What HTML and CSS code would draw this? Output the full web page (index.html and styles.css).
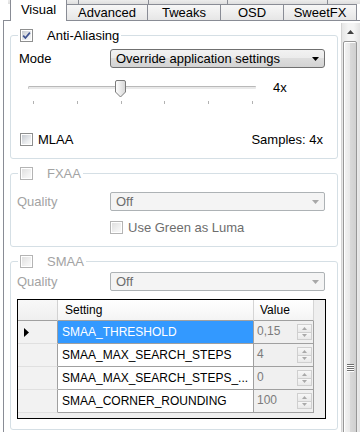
FILE: index.html
```html
<!DOCTYPE html>
<html>
<head>
<meta charset="utf-8">
<title>Visual</title>
<link rel="stylesheet" href="styles.css">
</head>
<body>
<div class="window">
  <div class="tabstrip">
    <div class="tab-gap-left"></div>
    <div class="tab selected w-visual">Visual</div>
    <div class="tab w-adv">Advanced</div>
    <div class="tab w-twk">Tweaks</div>
    <div class="tab w-osd">OSD</div>
    <div class="tab w-sfx">SweetFX</div>
    <div class="tab-gap-right"></div>
  </div>
  <div class="page">
    <div class="content">
      <div class="group g-aa">
        <div class="legend">
          <span class="cb"><svg class="check" width="9" height="9" viewBox="0 0 9 9"><path d="M1.2 4.6 L3.4 7 L7.9 1.6" fill="none" stroke="#3f5390" stroke-width="1.7"/></svg></span>
          <span class="legend-text">Anti-Aliasing</span>
        </div>
        <div class="row mode-row">
          <span class="label">Mode</span>
          <div class="combo">
            <span class="combo-text">Override application settings</span>
            <svg class="combo-arrow" width="7" height="4" viewBox="0 0 7 4"><path d="M0 0 H7 L3.5 4 Z" fill="#000"/></svg>
          </div>
        </div>
        <div class="slider-row">
          <div class="slider">
            <div class="track"></div>
            <div class="ticks"><i></i><i></i><i></i><i></i><i></i><i></i></div>
            <svg class="thumb" width="11" height="18" viewBox="0 0 11 18">
              <defs><linearGradient id="tg" x1="0" y1="0" x2="1" y2="0"><stop offset="0" stop-color="#ffffff"/><stop offset="1" stop-color="#d6d6d6"/></linearGradient></defs>
              <path d="M2 0.5 H9 A1.5 1.5 0 0 1 10.5 2 V12 L5.5 17 L0.5 12 V2 A1.5 1.5 0 0 1 2 0.5 Z" fill="url(#tg)" stroke="#7b7b7b"/>
            </svg>
          </div>
          <span class="slider-val">4x</span>
        </div>
        <div class="row mlaa-row">
          <span class="check-label"><span class="cb"></span><span class="cb-text">MLAA</span></span>
          <span class="samples">Samples: 4x</span>
        </div>
      </div>

      <div class="group g-fx">
        <div class="legend">
          <span class="cb dis"></span>
          <span class="legend-text dis-text">FXAA</span>
        </div>
        <div class="row q-row q-fx">
          <span class="label q-label">Quality</span>
          <div class="combo disabled">
            <span class="combo-text">Off</span>
            <svg class="combo-arrow" width="7" height="4" viewBox="0 0 7 4"><path d="M0 0 H7 L3.5 4 Z" fill="#a7a7a7"/></svg>
          </div>
        </div>
        <div class="row luma-row">
          <span class="check-label"><span class="cb dis"></span><span class="cb-text gray-text">Use Green as Luma</span></span>
        </div>
      </div>

      <div class="group g-sm">
        <div class="legend">
          <span class="cb dis"></span>
          <span class="legend-text dis-text">SMAA</span>
        </div>
        <div class="row q-row q-sm">
          <span class="label q-label">Quality</span>
          <div class="combo disabled">
            <span class="combo-text">Off</span>
            <svg class="combo-arrow" width="7" height="4" viewBox="0 0 7 4"><path d="M0 0 H7 L3.5 4 Z" fill="#a7a7a7"/></svg>
          </div>
        </div>
        <div class="grid">
          <div class="grid-row head">
            <div class="c-rh"></div>
            <div class="c-set">Setting</div>
            <div class="c-val">Value</div>
          </div>
          <div class="grid-row">
            <div class="c-rh"><svg width="5" height="9" viewBox="0 0 5 9"><path d="M0 0 L5 4.5 L0 9 Z" fill="#000"/></svg></div>
            <div class="c-set sel">SMAA_THRESHOLD</div>
            <div class="c-val"><span class="num">0,15</span><span class="spin"><span class="sp-b"><svg width="5" height="3" viewBox="0 0 5 3"><path d="M0 3 L2.5 0 L5 3 Z" fill="#a9a9a9"/></svg></span><span class="sp-b"><svg width="5" height="3" viewBox="0 0 5 3"><path d="M0 0 L5 0 L2.5 3 Z" fill="#a9a9a9"/></svg></span></span></div>
          </div>
          <div class="grid-row">
            <div class="c-rh"></div>
            <div class="c-set">SMAA_MAX_SEARCH_STEPS</div>
            <div class="c-val"><span class="num">4</span><span class="spin"><span class="sp-b"><svg width="5" height="3" viewBox="0 0 5 3"><path d="M0 3 L2.5 0 L5 3 Z" fill="#a9a9a9"/></svg></span><span class="sp-b"><svg width="5" height="3" viewBox="0 0 5 3"><path d="M0 0 L5 0 L2.5 3 Z" fill="#a9a9a9"/></svg></span></span></div>
          </div>
          <div class="grid-row">
            <div class="c-rh"></div>
            <div class="c-set">SMAA_MAX_SEARCH_STEPS_...</div>
            <div class="c-val"><span class="num">0</span><span class="spin"><span class="sp-b"><svg width="5" height="3" viewBox="0 0 5 3"><path d="M0 3 L2.5 0 L5 3 Z" fill="#a9a9a9"/></svg></span><span class="sp-b"><svg width="5" height="3" viewBox="0 0 5 3"><path d="M0 0 L5 0 L2.5 3 Z" fill="#a9a9a9"/></svg></span></span></div>
          </div>
          <div class="grid-row">
            <div class="c-rh"></div>
            <div class="c-set">SMAA_CORNER_ROUNDING</div>
            <div class="c-val"><span class="num">100</span><span class="spin"><span class="sp-b"><svg width="5" height="3" viewBox="0 0 5 3"><path d="M0 3 L2.5 0 L5 3 Z" fill="#a9a9a9"/></svg></span><span class="sp-b"><svg width="5" height="3" viewBox="0 0 5 3"><path d="M0 0 L5 0 L2.5 3 Z" fill="#a9a9a9"/></svg></span></span></div>
          </div>
        </div>
      </div>
    </div>
    <div class="scrollbar">
      <div class="sb-up"><svg width="7" height="4" viewBox="0 0 7 4"><path d="M0 4 L3.5 0 L7 4 Z" fill="#404040"/></svg></div>
      <div class="sb-thumb"><span class="grip"><i></i><i></i><i></i><i></i></span></div>
    </div>
  </div>
</div>
</body>
</html>
```

FILE: styles.css
```css
* { box-sizing: border-box; }
html, body { margin: 0; padding: 0; background: #fff; overflow: hidden; }
body {
  font-family: "Liberation Sans", Arial, sans-serif;
  font-size: 13px;
  color: #000;
}
.window {
  width: 360px;
  height: 432px;
  overflow: hidden;
  display: flex;
  flex-direction: column;
}

/* ---------- tabs ---------- */
.tabstrip {
  flex: none;
  height: 21px;
  display: flex;
  align-items: flex-end;
  background:
    linear-gradient(#898c95, #898c95) 78px 0 / 1px 4px no-repeat,
    linear-gradient(#898c95, #898c95) 148px 0 / 1px 4px no-repeat,
    linear-gradient(#898c95, #898c95) 227px 0 / 1px 4px no-repeat,
    linear-gradient(#898c95, #898c95) 327px 0 / 1px 4px no-repeat,
    linear-gradient(#ececec, #dedede) 8px 0 / 352px 4px no-repeat;
}
.tab-gap-left {
  width: 7px;
  margin-left: 3px;
  height: 1px;
  border-bottom: 1px solid #898c95;
}
.tab-gap-right {
  flex: 1;
  height: 1px;
  border-bottom: 1px solid #898c95;
}
.tab {
  height: 17px;
  border: 1px solid #898c95;
  border-left: none;
  background: linear-gradient(#f7f7f7, #e6e6e6);
  text-align: center;
  line-height: 15px;
  white-space: nowrap;
}
.tab.selected {
  height: 21px;
  border-top: none;
  border-bottom: none;
  border-left: 1px solid #898c95;
  background: #fff;
  padding-top: 2px;
}
.w-visual { width: 57px; }
.w-adv { width: 81px; }
.w-twk { width: 73px; }
.w-osd { width: 63px; }
.w-sfx { width: 73px; }

/* ---------- page ---------- */
.page {
  flex: 1;
  min-height: 0;
  display: flex;
  margin-left: 3px;
  border-left: 1px solid #898c95;
}
.content {
  flex: none;
  width: 337px;
  padding: 14px 3px 0 6px;
}

.group {
  border: 1px solid #d5dfe5;
  border-radius: 3px;
}
.group + .group { margin-top: 14px; }
.g-aa { padding-bottom: 11px; }
.g-fx { padding-bottom: 11px; }
.g-sm { padding-bottom: 10px; }

.legend {
  display: flex;
  align-items: center;
  width: max-content;
  height: 13px;
  margin-top: -7px;
  margin-left: 7px;
  padding: 0 2px;
  background: #fff;
}
.legend-text {
  margin-left: 14px;
  line-height: 13px;
}
.dis-text { color: #a3a3a3; }
.gray-text { color: #6d6d6d; }

/* checkbox */
.cb {
  flex: none;
  width: 13px;
  height: 13px;
  border: 1px solid #8e8f8f;
  padding: 1px;
  background: linear-gradient(135deg, #c6cad0, #eef0f2 70%, #f8f8f8) content-box, #fff;
  display: inline-flex;
  align-items: center;
  justify-content: center;
}
.cb.dis {
  border-color: #b4b4b4;
  background: linear-gradient(135deg, #e0e0e0, #f3f3f3 70%, #f8f8f8) content-box, #fff;
}
.check { display: block; }

.row {
  display: flex;
  align-items: center;
}
.mode-row {
  margin-top: 7px;
  height: 19px;
  padding-left: 8px;
}
.label {
  flex: none;
  width: 91px;
  line-height: 15px;
}
.q-row { padding-left: 6px; height: 19px; }
.q-label { width: 93px; color: #a3a3a3; }
.q-fx { margin-top: 12px; }
.q-sm { margin-top: 4px; }

/* combo */
.combo {
  flex: none;
  width: 215px;
  height: 19px;
  border: 1px solid #707070;
  border-radius: 3px;
  background: linear-gradient(#f2f2f2 0%, #ebebeb 50%, #dddddd 50%, #d3d3d3 100%);
  display: flex;
  align-items: center;
  justify-content: space-between;
  padding: 0 5px 0 5px;
}
.combo-text { line-height: 15px; white-space: nowrap; }
.combo.disabled {
  border-color: #adb2b5;
  border-radius: 2px;
  background: #f4f4f4;
  color: #6d6d6d;
}
.combo-arrow { display: block; flex: none; }

/* slider */
.slider-row {
  display: flex;
  align-items: flex-start;
  margin-top: 11px;
  height: 26px;
  padding-left: 17px;
}
.slider {
  position: relative;
  flex: none;
  width: 228px;
  height: 26px;
}
.track {
  margin-top: 7px;
  height: 3px;
  border-top: 1px solid #b9b9b9;
  border-left: 1px solid #c6c6c6;
  background: #e9e9e9;
  border-radius: 1px;
}
.ticks {
  margin-top: 12px;
  height: 3px;
  display: flex;
  justify-content: space-between;
  padding: 0 3px 0 5px;
}
.ticks i {
  display: block;
  width: 1px;
  height: 3px;
  background: #b2b2b2;
}
.thumb {
  position: absolute;
  left: 87px;
  top: 1px;
  display: block;
}
.slider-val {
  margin-left: 17px;
  margin-top: 1px;
  line-height: 15px;
}

.mlaa-row {
  margin-top: 27px;
  height: 15px;
  padding: 0 14px 0 9px;
  justify-content: space-between;
}
.check-label {
  display: flex;
  align-items: center;
}
.cb-text {
  margin-left: 5px;
  line-height: 15px;
  white-space: nowrap;
}
.luma-row {
  margin-top: 9px;
  height: 15px;
  padding-left: 99px;
}

/* ---------- data grid ---------- */
.grid {
  margin: 8px 0 0 6px;
  width: 309px;
  height: 120px;
  border: 1px solid #000;
  background: #efefef;
  overflow: hidden;
  font-size: 12px;
}
.grid-row {
  display: flex;
  height: 23px;
}
.grid-row.head {
  height: 21px;
}
.c-rh {
  flex: none;
  width: 40px;
  border-right: 1px solid #a0a0a0;
  border-bottom: 1px solid #e0e0e0;
  background: #f2f2f2;
  display: flex;
  align-items: center;
  padding-left: 6px;
}
.c-set {
  flex: none;
  width: 196px;
  border-right: 1px solid #a0a0a0;
  border-bottom: 1px solid #a0a0a0;
  background: #fff;
  padding-left: 4px;
  line-height: 22px;
  white-space: nowrap;
  overflow: hidden;
}
.c-set.sel {
  background: #3399ff;
  color: #fff;
}
.c-val {
  flex: none;
  width: 60px;
  border-right: 1px solid #a0a0a0;
  border-bottom: 1px solid #a0a0a0;
  background: #f0f0f0;
  display: flex;
  align-items: center;
  justify-content: space-between;
  padding: 0 1px 0 3px;
}
.head .c-rh {
  background: linear-gradient(#f8f8f8, #efefef);
  border-bottom: 1px solid #a0a0a0;
  border-right: 1px solid #d2d2d2;
}
.head .c-set,
.head .c-val {
  background: linear-gradient(#ffffff, #f4f4f4);
  border-right: 1px solid #d5d5d5;
  line-height: 20px;
  display: block;
}
.head .c-set { padding-left: 7px; }
.head .c-val { padding-left: 6px; }
.num {
  color: #7b7b7b;
  line-height: 15px;
  margin-top: -2px;
}
.spin {
  display: flex;
  flex-direction: column;
  width: 15px;
  height: 16px;
  margin-top: 0;
}
.sp-b {
  flex: 1;
  display: flex;
  align-items: center;
  justify-content: center;
  border: 1px solid #cfcfcf;
  background: linear-gradient(#f7f7f7, #e9e9e9);
}
.sp-b + .sp-b { border-top: none; }
.sp-b svg { display: block; }

/* ---------- scrollbar ---------- */
.scrollbar {
  flex: none;
  width: 19px;
  margin-top: 2px;
  display: flex;
  flex-direction: column;
  border-left: 1px solid #d4d4d4;
  background: linear-gradient(to right, #e6e6e6, #f4f4f4 35%, #f4f4f4 65%, #e3e3e3);
}
.sb-up {
  flex: none;
  height: 18px;
  display: flex;
  align-items: center;
  justify-content: center;
  padding-right: 2px;
}
.sb-up svg { display: block; }
.sb-thumb {
  flex: none;
  height: 652px;
  margin: 0 3px 0 1px;
  border: 1px solid #979797;
  border-radius: 2px;
  background: linear-gradient(to right, #f3f3f3, #e8e8e8 50%, #d9d9d9 51%, #d0d0d0);
  box-shadow: inset 1px 1px 0 #fff;
  display: flex;
  align-items: center;
  justify-content: center;
}
.grip {
  display: flex;
  flex-direction: column;
  gap: 1px;
}
.grip i {
  display: block;
  width: 7px;
  height: 1px;
  background: #6f6f6f;
  box-shadow: 0 1px 0 #fff;
}
```
